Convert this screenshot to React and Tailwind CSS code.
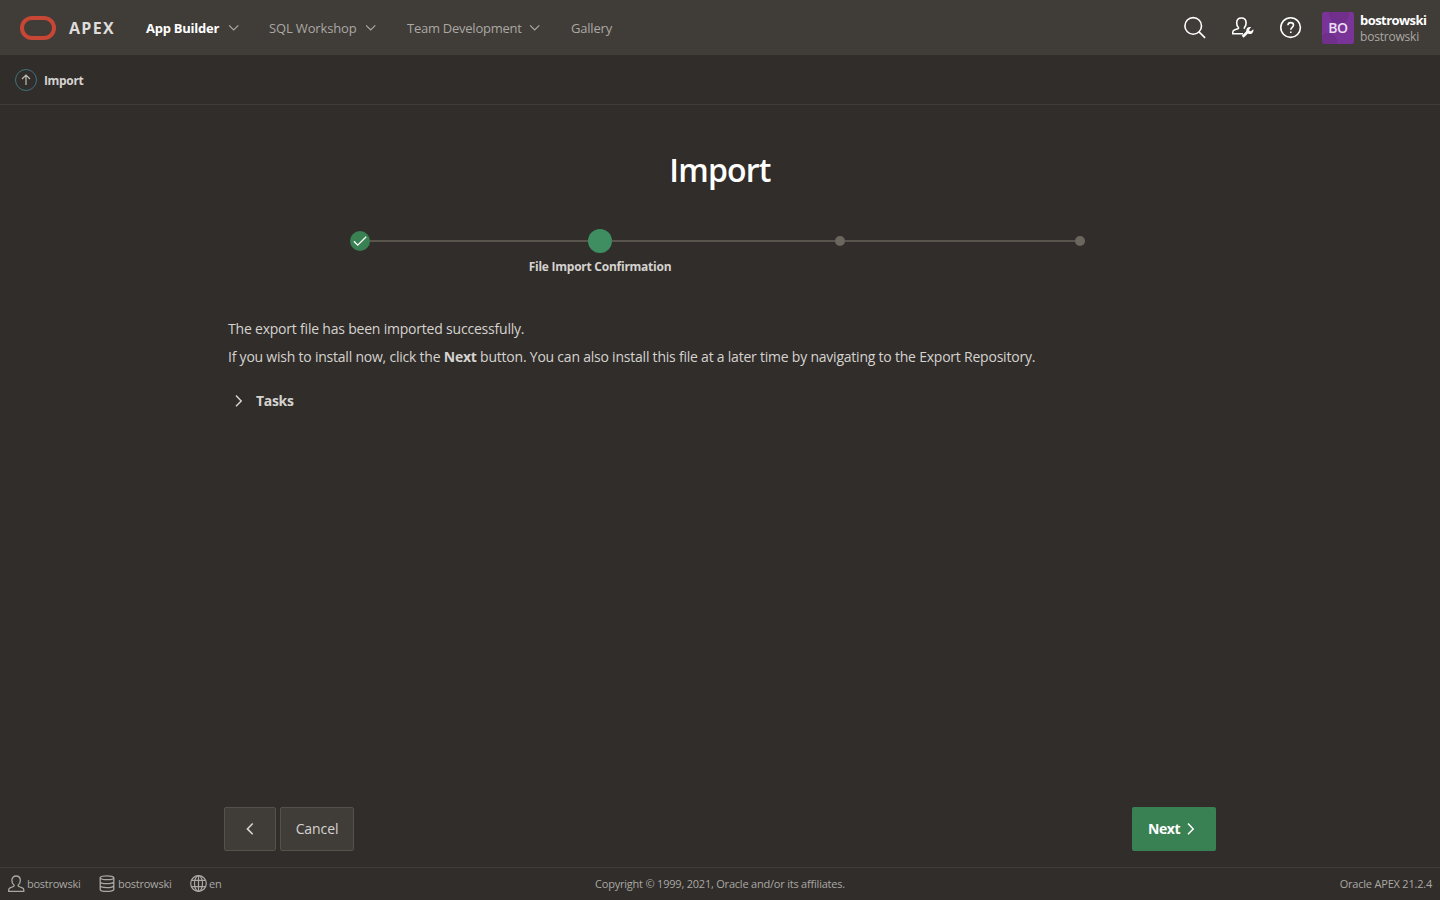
import React from "react";

const Chevron = ({ d, size = 16, width = 1.2, className = "" }) => (
  <svg width={size} height={size} viewBox="0 0 16 16" fill="none" stroke="currentColor" strokeWidth={width} className={"shrink-0 " + className}>
    <path d={d} />
  </svg>
);
const DOWN = "M3.1 5.4 7.700 10l4.6-4.6";
const RIGHT = "M5 2.500 10.200 8l-5.200 5.300";
const LEFT = "M10.7 2.5 5.400 7.900l5.300 5.400";

function NavItem({ label, labelClass, arrow = true }) {
  return (
    <div className="flex items-center">
      <span className={"whitespace-nowrap pt-0.5 " + labelClass}>{label}</span>
      {arrow && <Chevron d={DOWN} className="ml-1.5 text-[#aaa8a4]" />}
    </div>
  );
}

function UserIcon() {
  return (
    <svg width="18" height="18" viewBox="0 0 18 18" fill="none" stroke="currentColor" strokeWidth="1.3" className="shrink-0">
      <path d="M5.700 9.700C4.500 8.700 3.900 7.200 3.900 5.300 3.900 2.700 5.600 1 8.100 1s4.200 1.700 4.200 4.300c0 1.900-.6 3.400-1.800 4.400-.7.6-.5 1.500.3 1.800l3.500 1.300c1 .4 1.500 1.100 1.500 2.100v1.400H.7v-1.400c0-1 .4-1.700 1.400-2.100l3.400-1.300c.8-.3.900-1.200.2-1.800Z" />
    </svg>
  );
}

function DatabaseIcon() {
  return (
    <svg width="18" height="18" viewBox="0 0 18 18" fill="none" stroke="currentColor" strokeWidth="1.3" className="shrink-0">
      <ellipse cx="8" cy="2.800" rx="6.800" ry="1.900" />
      <path d="M1.200 2.800v11.600c0 1.100 3 2 6.800 2s6.800-.9 6.800-2V2.800M1.200 6.700c0 1.100 3 2 6.800 2s6.800-.9 6.800-2M1.200 10.600c0 1.100 3 2 6.800 2s6.800-.9 6.800-2" />
    </svg>
  );
}

function GlobeIcon() {
  return (
    <svg width="18" height="18" viewBox="0 0 18 18" fill="none" stroke="currentColor" strokeWidth="1.2" className="shrink-0">
      <circle cx="8.500" cy="8.500" r="7.800" />
      <ellipse cx="8.500" cy="8.500" rx="4" ry="7.800" />
      <path d="M8.500.7v15.600M1.600 5.300h13.800M1.600 11.700h13.800" />
    </svg>
  );
}

function Header() {
  return (
    <header className="flex h-[55px] shrink-0 items-center bg-[#403c38] pl-5 pr-3.5">
      <svg width="36" height="24" viewBox="0 0 36 24" fill="none" className="shrink-0">
        <rect x="2" y="2" width="32" height="20" rx="10" stroke="#c74634" strokeWidth="4" />
      </svg>
      <span className="ml-[13px] w-[77px] pt-0.5 text-[16px] font-bold tracking-[1.3px] text-[#dedcda]">APEX</span>
      <nav className="flex items-center text-[13px] text-[#aaa8a4]">
        <div className="w-[123px]"><NavItem label="App Builder" labelClass="w-[74px] font-bold text-white tracking-[-0.25px]" /></div>
        <div className="w-[137px]"><NavItem label="SQL Workshop" labelClass="w-[88px] tracking-[-0.15px]" /></div>
        <div className="w-[164px]"><NavItem label="Team Development" labelClass="w-[115px] pl-px tracking-[-0.25px]" /></div>
        <NavItem label="Gallery" labelClass="w-[42px] pl-px tracking-[-0.2px]" arrow={false} />
      </nav>
      <div className="ml-auto flex items-center text-white">
        <svg width="24" height="24" viewBox="0 0 24 24" fill="none" stroke="currentColor" strokeWidth="1.600" className="mr-6">
          <circle cx="10.200" cy="9.900" r="8.300" />
          <path d="m16 15.900 6.100 6" />
        </svg>
        <svg width="24" height="24" viewBox="0 0 24 24" fill="none" stroke="currentColor" strokeWidth="1.600" className="mr-6">
          <path d="M12 17.800H1.800v-1.600c0-1.100.5-1.800 1.500-2.200l3.500-1.200c.9-.4 1-1 .4-1.600C6.200 10.200 5.700 8.700 5.700 7 5.700 4.100 7.500 2 10.400 2s4.700 2.100 4.700 5c0 1.700-.5 3.200-1.500 4.200-.5.6-.3 1.100.2 1.400" />
          <path d="m11.700 20.700 5.600-5.500" strokeWidth="2.700" />
          <path d="m20.100 11.200-1.900 2.200.3 1.600 1.500.3 2.200-2c.5 1.500.1 3-1 3.900-1.100.9-2.600 1.100-3.900.5l-1.700-1.700c-.6-1.300-.4-2.800.6-3.900 1-1 2.500-1.400 3.900-.9Z" fill="currentColor" stroke="none" />
        </svg>
        <svg width="24" height="24" viewBox="0 0 24 24" fill="none" stroke="currentColor" strokeWidth="1.600" className="mr-[19px]">
          <circle cx="11.600" cy="11.600" r="9.800" />
          <path d="M8.900 9.200c.1-1.600 1.200-2.600 2.800-2.600s2.800 1 2.800 2.500c0 2.200-2.700 2.200-2.700 4.600" />
          <path d="M11 15.400h1.600V17H11z" fill="currentColor" stroke="none" />
        </svg>
        <div className="flex size-8 shrink-0 items-center justify-center overflow-hidden rounded-xs bg-[radial-gradient(circle_at_6px_30px,#702f8b_0_9px,transparent_9px),radial-gradient(circle_at_17px_2px,#702f8b_0_10px,transparent_10px)] bg-[#7a3397] text-sm font-semibold tracking-[-0.3px] text-[#eadff0]">BO</div>
        <div className="ml-1.5 flex w-[66px] flex-col whitespace-nowrap pt-px leading-4">
          <span className="text-[13px] leading-4 font-bold tracking-[-0.55px]">bostrowski</span>
          <span className="text-xs leading-[17px] tracking-[-0.2px] text-[#aaa8a4]">bostrowski</span>
        </div>
      </div>
    </header>
  );
}

function Stepper() {
  return (
    <div className="mt-[39px] w-[960px] self-center">
      <ol className="grid h-6 grid-cols-4 items-center">
        <li className="flex items-center">
          <span className="w-[110px]" />
          <span className="flex size-5 shrink-0 items-center justify-center rounded-full bg-[#398053]">
            <svg width="16" height="16" viewBox="0 0 16 16" fill="none" stroke="#fff" strokeWidth="1.300"><path d="m1.900 8.300 3.800 3.800 8.500-8.300" /></svg>
          </span>
          <span className="h-0.5 grow bg-[#5a554c]" />
        </li>
        <li className="flex items-center">
          <span className="h-0.5 grow bg-[#5a554c]" />
          <span className="size-6 shrink-0 rounded-full bg-[#3e8e61]" />
          <span className="h-0.5 grow bg-[#5a554c]" />
        </li>
        <li className="flex items-center">
          <span className="h-0.5 grow bg-[#5a554c]" />
          <span className="size-2.5 shrink-0 rounded-full bg-[#6b665e]" />
          <span className="h-0.5 grow bg-[#5a554c]" />
        </li>
        <li className="flex items-center">
          <span className="h-0.5 w-[115px] bg-[#5a554c]" />
          <span className="size-2.5 shrink-0 rounded-full bg-[#6b665e]" />
        </li>
      </ol>
      <div className="mt-1.5 grid grid-cols-4">
        <span className="col-start-2 whitespace-nowrap text-center text-xs leading-4 font-bold tracking-[-0.25px] text-[#d5d3d0]">File Import Confirmation</span>
      </div>
    </div>
  );
}

export default function App() {
  return (
    <div className="flex h-screen w-full flex-col overflow-hidden bg-[#312d2a] font-['Open_Sans',sans-serif] text-sm text-[#d5d3d0]">
      <Header />
      <div className="flex h-[50px] shrink-0 items-center border-b border-[#403c38] pl-[15px]">
        <span className="flex size-[22px] items-center justify-center rounded-full border border-[#41717c]">
          <svg width="16" height="16" viewBox="0 0 16 16" fill="none" stroke="#c0bdb8" strokeWidth="1.200"><path d="M8 13V3M4 7l4-4 4 4" /></svg>
        </span>
        <span className="ml-[7px] pt-0.5 text-xs font-bold tracking-[-0.35px]">Import</span>
      </div>
      <main className="flex min-h-0 grow flex-col">
        <h1 className="mt-[45px] text-center text-[32px] leading-10 font-semibold tracking-[-0.8px] text-white">Import</h1>
        <Stepper />
        <div className="mx-auto mt-10 w-[984px] leading-7">
          <p><span className="tracking-[-0.205px]">The export file has been imported successfully.</span></p>
          <p className="whitespace-nowrap"><span className="tracking-[-0.222px]">If you wish to install now, click the <b>Next</b> button. You can also install this file at a later time by navigating to the Export Repository.</span></p>
          <div className="mt-4 flex items-center pl-[3px]">
            <Chevron d={RIGHT} width={1.500} />
            <b className="ml-[9px] tracking-[-0.3px]">Tasks</b>
          </div>
        </div>
        <div className="mx-auto mt-auto mb-4 flex h-11 w-[992px] shrink-0 items-center">
          <button className="flex h-11 w-[52px] items-center justify-center rounded-xs border border-[#54504a] bg-[#403c38]">
            <Chevron d={LEFT} width={1.600} />
          </button>
          <button className="ml-1 h-11 w-[74px] rounded-xs border border-[#54504a] bg-[#403c38] tracking-[-0.1px]">Cancel</button>
          <button className="ml-auto flex h-11 w-[84px] items-center rounded-xs bg-[#398053] pl-4 font-bold text-white">
            <span className="w-[35px] text-left tracking-[-0.4px]">Next</span>
            <Chevron d={RIGHT} width={1.500} />
          </button>
        </div>
      </main>
      <footer className="flex h-[33px] shrink-0 items-center border-t border-[#403c38] px-2 text-[11px] text-[#aaa8a4]">
        <div className="flex flex-1 items-center">
          <div className="flex w-[91px] items-center gap-px"><UserIcon /><span className="tracking-[-0.25px]">bostrowski</span></div>
          <div className="flex w-[91px] items-center gap-px"><DatabaseIcon /><span className="tracking-[-0.25px]">bostrowski</span></div>
          <div className="flex items-center gap-px"><GlobeIcon /><span className="tracking-[-0.2px]">en</span></div>
        </div>
        <span className="whitespace-nowrap tracking-[-0.21px]">Copyright © 1999, 2021, Oracle and/or its affiliates.</span>
        <span className="flex-1 text-right tracking-[-0.21px]">Oracle APEX 21.2.4</span>
      </footer>
    </div>
  );
}
